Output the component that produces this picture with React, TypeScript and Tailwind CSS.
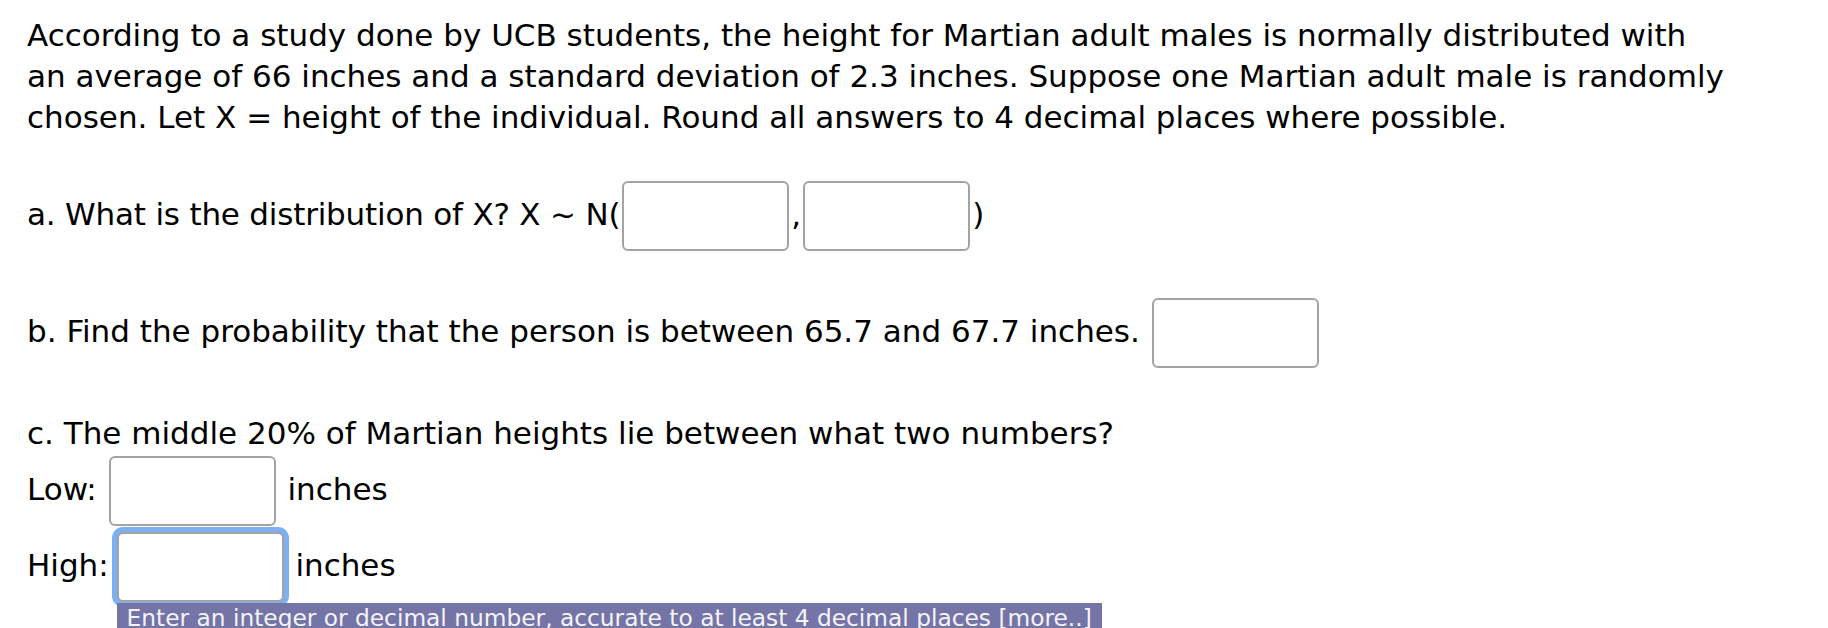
function AnswerBox({ focused = false, hint }: { focused?: boolean; hint?: string }) {
  return (
    <span className="relative mx-[2px] inline-flex shrink-0">
      <input
        type="text"
        className={
          "h-[70px] w-[167px] rounded-[6px] border-2 border-[#a3a3a3] bg-white outline-none " +
          (focused ? "ring-[5px] ring-[#7db0f2]" : "")
        }
      />
      {hint && (
        <span className="absolute left-0 top-[calc(100%+1px)] z-10 h-[40px] whitespace-nowrap bg-[#7474a6] px-[10px] text-[23.3px] leading-[30px] text-[#f4f4f8]">
          {hint}
        </span>
      )}
    </span>
  );
}

export default function App() {
  return (
    <div className="h-[628px] overflow-hidden bg-white pl-[27px] pt-[15px] font-['DejaVu_Sans',sans-serif] text-[31px] leading-[41px] text-black">
      <p className="whitespace-nowrap">
        According to a study done by UCB students, the height for Martian adult males is normally distributed with
        <br />
        an average of 66 inches and a standard deviation of 2.3 inches. Suppose one Martian adult male is randomly
        <br />
        chosen. Let X = height of the individual. Round all answers to 4 decimal places where possible.
      </p>

      <div className="mt-[43px] flex items-center whitespace-nowrap">
        <span className="mb-[4px] tracking-[-0.2px]">a. What is the distribution of X? X ~ N(</span>
        <AnswerBox />
        <span className="mb-[4px]">,</span>
        <AnswerBox />
        <span className="mb-[4px]">)</span>
      </div>

      <div className="mt-[47px] flex items-center whitespace-nowrap">
        <span className="mb-[4px]">b. Find the probability that the person is between 65.7 and 67.7 inches.&nbsp;</span>
        <AnswerBox />
      </div>

      <p className="mt-[45px] whitespace-nowrap">c. The middle 20% of Martian heights lie between what two numbers?</p>

      <div className="mt-[2px] flex items-center whitespace-nowrap">
        <span className="mb-[4px]">Low:&nbsp;</span>
        <AnswerBox />
        <span className="mb-[4px]">&nbsp;inches</span>
      </div>

      <div className="mt-[6px] flex items-center whitespace-nowrap">
        <span className="mb-[4px] mr-[-4px]">High:&nbsp;</span>
        <AnswerBox
          focused
          hint="Enter an integer or decimal number, accurate to at least 4 decimal places [more..]"
        />
        <span className="mb-[4px]">&nbsp;inches</span>
      </div>
    </div>
  );
}
